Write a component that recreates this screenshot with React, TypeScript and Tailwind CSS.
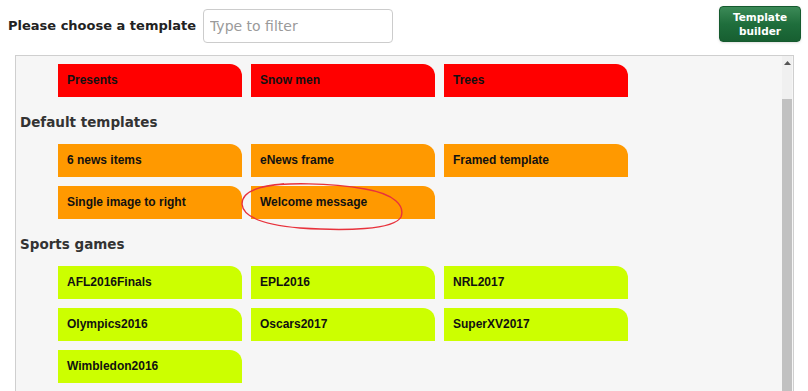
import React from 'react';

interface Group {
  title?: string;
  color: string;
  items: string[];
}

const groups: Group[] = [
  { color: 'bg-[#ff0000]', items: ['Presents', 'Snow men', 'Trees'] },
  { title: 'Default templates', color: 'bg-[#ff9900]', items: ['6 news items', 'eNews frame', 'Framed template', 'Single image to right', 'Welcome message'] },
  { title: 'Sports games', color: 'bg-[#ccff00]', items: ['AFL2016Finals', 'EPL2016', 'NRL2017', 'Olympics2016', 'Oscars2017', 'SuperXV2017', 'Wimbledon2016'] },
];

const verdana = { fontFamily: '"DejaVu Sans", Verdana, sans-serif' };
const arial = { fontFamily: '"Liberation Sans", Arial, sans-serif' };

const Tile: React.FC<{ label: string; color: string }> = ({ label, color }) => (
  <div
    className={`${color} h-[33px] w-[184px] rounded-tr-[12px] pl-[9px] pt-[9px] text-[12px] leading-[15px] font-bold text-[#111]`}
    style={arial}
  >
    {label}
  </div>
);

const App: React.FC = () => {
  return (
    <div className="relative h-[391px] w-[808px] overflow-hidden bg-white flex flex-col">
      <div className="flex items-start h-[55px] shrink-0">
        <div className="flex items-center mt-[9px] ml-[8px]">
          <span className="text-[13px] font-bold text-[#222] mr-[7px]" style={verdana}>
            Please choose a template
          </span>
          <input
            type="text"
            placeholder="Type to filter"
            className="h-[34px] w-[190px] rounded-[4px] border border-[#ccc] bg-white px-[6px] text-[14px] placeholder-[#9a9a9a] outline-none"
            style={verdana}
          />
        </div>
        <button
          className="ml-auto mr-[7px] mt-[6px] h-[36px] w-[82px] rounded-[4px] border border-[#155a2e] bg-gradient-to-b from-[#3b8a57] via-[#1f6e3c] to-[#175f31] text-white text-[10.5px] font-bold leading-[14px] shadow-sm"
          style={verdana}
        >
          Template
          <br />
          builder
        </button>
      </div>

      <div className="flex h-[360px] shrink-0 ml-[15px] mr-[14px] border border-[#cfcfcf] bg-[#f6f6f6]">
        <div className="flex-1 pt-[8px]">
          {groups.map((g, gi) => (
            <div key={gi}>
              {g.title && (
                <h3
                  className="pl-[4px] mt-[15px] mb-[12px] h-[20px] leading-[20px] text-[13.5px] font-bold text-[#333]"
                  style={verdana}
                >
                  {g.title}
                </h3>
              )}
              <div className="grid grid-cols-[184px_184px_184px] gap-[9px] pl-[42px]">
                {g.items.map((it) => (
                  <Tile key={it} label={it} color={g.color} />
                ))}
              </div>
            </div>
          ))}
        </div>
        <div className="w-[10px] mr-[1px] flex flex-col bg-[#f0f0f0]">
          <div className="h-[43px] flex justify-center pt-[5px]">
            <svg width="7" height="4" viewBox="0 0 7 4">
              <path d="M0 4 L3.5 0 L7 4 Z" fill="#555" />
            </svg>
          </div>
          <div className="flex-1 bg-[#c1c1c1]" />
        </div>
      </div>

      <svg className="absolute inset-0 pointer-events-none" width="808" height="391">
        <path
          d="M262 187 C285 182, 330 183, 365 189 C395 194, 405 206, 401 217 C394 230, 345 231, 300 228 C265 225, 243 218, 242 204 C242 193, 255 186, 284 184"
          fill="none"
          stroke="#e8323c"
          strokeWidth="1.4"
        />
      </svg>
    </div>
  );
};

export default App;
